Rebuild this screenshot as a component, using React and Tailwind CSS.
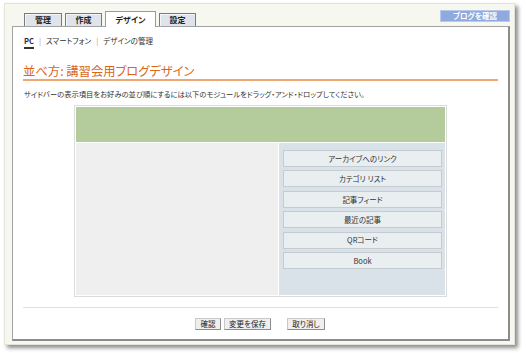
const TABS = [
  { label: '管理', w: 'w-[38px]' },
  { label: '作成', w: 'w-[37px]' },
  { label: 'デザイン', w: 'w-[51px]', active: true },
  { label: '設定', w: 'w-[37px]' },
]

const MODULES = ['アーカイブへのリンク', 'カテゴリ リスト', '記事フィード', '最近の記事', 'QRコード', 'Book']

function SmallButton({ children, className = '' }) {
  return (
    <button
      type="button"
      className={`h-[12px] border border-[#8d8d8d] border-t-[#c9c9c9] border-l-[#c9c9c9] bg-[#efefef] text-[7.5px] leading-[10px] text-[#222] ${className}`}
    >
      {children}
    </button>
  )
}

export default function App() {
  return (
    <div className="min-h-[353px] w-[526px] bg-white pl-[4px] pt-[3px] font-['Noto_Sans_CJK_JP',sans-serif] [font-feature-settings:'palt']">
      <div className="flex h-[342px] w-[511px] flex-col border border-[#e2e4dc] bg-[#f6f8f0] pb-[3px] pl-[7px] pr-[4px] pt-[5px] shadow-[3px_3px_4px_rgba(0,0,0,0.45)]">
        {/* tabs + link button */}
        <div className="flex h-[17px] items-start justify-between">
          <div className="ml-[12px] flex h-full items-end gap-[3px]">
            {TABS.map((t) =>
              t.active ? (
                <div
                  key={t.label}
                  className={`${t.w} relative z-10 mb-[-1px] flex h-[16px] items-center justify-center border border-b-0 border-[#9a9a9a] bg-white text-[8px] font-bold leading-none text-[#222]`}
                >
                  {t.label}
                </div>
              ) : (
                <div
                  key={t.label}
                  className={`${t.w} flex h-[13px] items-center justify-center border border-b-0 border-[#7a7a7a] bg-[#dfe4ec] text-[8px] font-bold leading-none text-[#222] shadow-[inset_1px_1px_0_#f4f6fa]`}
                >
                  {t.label}
                </div>
              ),
            )}
          </div>
          <div className="mt-[1px] flex h-[12px] w-[70px] items-center justify-center border border-[#b9c9ec] bg-[#8eaade] text-[7.5px] font-bold leading-none text-white">
            ブログを確認
          </div>
        </div>

        {/* content box */}
        <div className="flex flex-1 flex-col border border-r-2 border-b-2 border-[#a3a3a3] border-r-[#8c8c8c] border-b-[#8c8c8c] bg-white px-[10px] pt-[8px]">
          <div className="flex h-[14px] items-start gap-[5px] pl-[1px] text-[7.5px] leading-[12px] text-[#333]">
            <span className="border-b-2 border-[#333] font-bold leading-[12px] text-[#1f2a44]">PC</span>
            <span className="text-[#999]">|</span>
            <span>スマートフォン</span>
            <span className="text-[#999]">|</span>
            <span>デザインの管理</span>
          </div>

          <h1 className="mt-[15px] border-b-2 border-[#eba873] text-[12.3px] font-normal leading-[15px] text-[#d9661a]">
            並べ方: 講習会用ブログデザイン
          </h1>

          <p className="mt-[7px] pl-[1px] text-[7.3px] leading-[12px] text-[#333]">
            サイドバーの表示項目をお好みの並び順にするには以下のモジュールをドラッグ・アンド・ドロップしてください。
          </p>

          {/* layout preview */}
          <div className="ml-[51px] mt-[5px] flex h-[192px] w-[373px] flex-col gap-[1px] border border-[#dcdcdc] bg-white p-[1px]">
            <div className="h-[35px] bg-[#b4cb9b]" />
            <div className="flex flex-1 gap-[1px]">
              <div className="w-[202px] bg-[#efefef]" />
              <div className="flex flex-1 flex-col gap-[3.4px] bg-[#d9e2e8] pl-[4px] pr-[3px] pt-[7px]">
                {MODULES.map((m) => (
                  <div
                    key={m}
                    className="flex h-[17px] items-center justify-center border border-[#c4ccd2] bg-[#e9eef1] text-[7.5px] leading-none text-[#333]"
                  >
                    {m}
                  </div>
                ))}
              </div>
            </div>
          </div>

          <div className="mt-[10px] h-px bg-[#dbe2ea]" />

          <div className="mt-[10px] flex justify-center pr-[1px]">
            <SmallButton className="w-[26px]">確認</SmallButton>
            <SmallButton className="ml-[3px] w-[47px]">変更を保存</SmallButton>
            <SmallButton className="ml-[16px] w-[38px]">取り消し</SmallButton>
          </div>
        </div>
      </div>
    </div>
  )
}
